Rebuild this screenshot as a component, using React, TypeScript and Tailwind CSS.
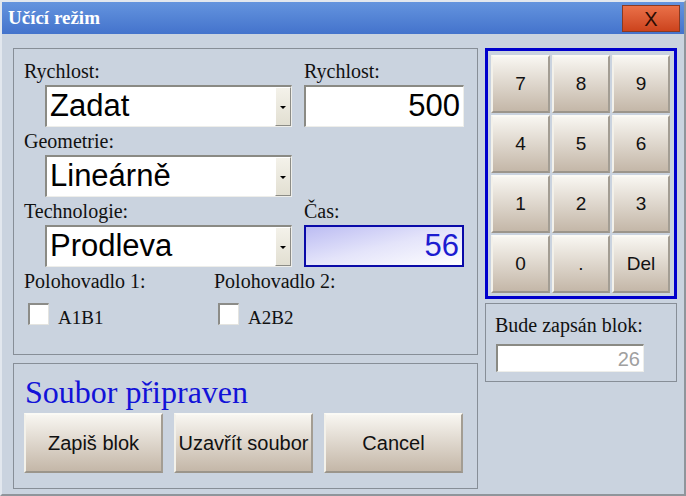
import React from 'react';

const serif = { fontFamily: '"Liberation Serif", "Times New Roman", serif' };
const sans = { fontFamily: '"Liberation Sans", Arial, sans-serif' };

function Label({ children }: { children: React.ReactNode }) {
  return (
    <div className="h-[28px] leading-[28px] text-[20px] text-[#111] whitespace-nowrap" style={serif}>
      {children}
    </div>
  );
}

function Select({ value }: { value: string }) {
  return (
    <div className="ml-[21px] w-[247px] h-[42px] flex bg-white border-t-2 border-l-2 border-t-[#8a8a84] border-l-[#8a8a84] border-b border-r border-b-[#eeeeea] border-r-[#eeeeea]">
      <div className="flex-1 flex items-center pl-[3px] text-[31px] text-black" style={sans}>
        {value}
      </div>
      <div className="w-[16px] flex items-center justify-center bg-linear-to-b from-[#f4f2ea] to-[#e2dfd2] border-t border-l border-t-[#ffffff] border-l-[#ffffff] border-b border-r border-b-[#8c8c86] border-r-[#8c8c86]">
        <div className="mt-[2px] w-0 h-0 border-l-[3px] border-r-[3px] border-t-[3px] border-l-transparent border-r-transparent border-t-black" />
      </div>
    </div>
  );
}

function NumInput({ value, active }: { value: string; active?: boolean }) {
  return (
    <div
      className={
        active
          ? 'w-[160px] h-[42px] flex items-center justify-end pr-[3px] border-2 border-[#0a0aa8] bg-linear-to-br from-[#bcbcf2] via-[#e4e4fa] to-[#ffffff] text-[31px] text-[#1c1cd0]'
          : 'w-[160px] h-[42px] flex items-center justify-end pr-[3px] bg-white border-t-2 border-l-2 border-t-[#8a8a84] border-l-[#8a8a84] border-b border-r border-b-[#eeeeea] border-r-[#eeeeea] text-[31px] text-black'
      }
      style={sans}
    >
      {value}
    </div>
  );
}

function Check({ label }: { label: string }) {
  return (
    <div className="mt-[8px] pl-[4px] flex items-start gap-[9px]">
      <div className="w-[21px] h-[22px] bg-white border-t-2 border-l-2 border-t-[#8c8c88] border-l-[#8c8c88] border-b border-r border-b-[#e4e4e0] border-r-[#e4e4e0]" />
      <span className="mt-[3px] leading-[24px] text-[19px] text-[#111]" style={serif}>
        {label}
      </span>
    </div>
  );
}

function Key({ children, size }: { children: React.ReactNode; size: string }) {
  return (
    <button
      className={`${size} flex items-center justify-center bg-linear-to-b from-[#f8f6f1] to-[#c4b7a8] border-t-2 border-l-2 border-t-[#fbfaf5] border-l-[#f3f1ea] border-b-2 border-r-2 border-b-[#9b958b] border-r-[#a39d93] text-[#111]`}
      style={sans}
    >
      {children}
    </button>
  );
}

export default function App() {
  const keys = ['7', '8', '9', '4', '5', '6', '1', '2', '3', '0', '.', 'Del'];
  return (
    <div className="w-[686px] h-[496px] flex flex-col bg-[#cad3df] border-2 border-t-[#e2e7ee] border-l-[#e2e7ee] border-r-[#8f959b] border-b-[#8f959b] overflow-hidden">
      <div className="h-[32px] flex justify-between bg-linear-to-b from-[#6494de] to-[#4473cc]">
        <div className="pl-[6px] leading-[32px] text-[19px] font-bold text-white" style={serif}>
          Učící režim
        </div>
        <button
          className="mt-[3px] mr-[4px] w-[58px] h-[27px] flex items-center justify-center bg-linear-to-b from-[#ea7048] to-[#cc431c] border border-[#8a3a22] text-[20px] text-[#2a0c04]"
          style={sans}
        >
          X
        </button>
      </div>

      <div className="flex-1 flex gap-[7px] pl-[11px] pt-[14px]">
        <div className="w-[465px] flex flex-col gap-[8px]">
          <div className="h-[307px] border border-[#878e97] pl-[10px] pt-[8px]">
            <div className="flex gap-[12px]">
              <div className="w-[268px]">
                <Label>Rychlost:</Label>
                <Select value="Zadat" />
                <Label>Geometrie:</Label>
                <Select value="Lineárně" />
                <Label>Technologie:</Label>
                <Select value="Prodleva" />
              </div>
              <div className="w-[160px]">
                <Label>Rychlost:</Label>
                <NumInput value="500" />
                <div className="h-[70px]" />
                <Label>Čas:</Label>
                <NumInput value="56" active />
              </div>
            </div>
            <div className="flex">
              <div className="w-[190px]">
                <Label>Polohovadlo 1:</Label>
                <Check label="A1B1" />
              </div>
              <div className="w-[190px]">
                <Label>Polohovadlo 2:</Label>
                <Check label="A2B2" />
              </div>
            </div>
          </div>

          <div className="h-[126px] border border-[#878e97] pl-[10px] pt-[12px]">
            <div className="pl-[1px] h-[32px] leading-[32px] text-[32px] text-[#1212d8]" style={serif}>
              Soubor připraven
            </div>
            <div className="mt-[5px] flex gap-[11px]">
              <Key size="w-[139px] h-[60px] text-[20px]">Zapiš blok</Key>
              <Key size="w-[139px] h-[60px] text-[20px]">Uzavřít soubor</Key>
              <Key size="w-[139px] h-[60px] text-[20px]">Cancel</Key>
            </div>
          </div>
        </div>

        <div className="w-[192px] flex flex-col gap-[4px]">
          <div className="h-[251px] border-[3px] border-[#0000cc] pl-[3px] pt-[4px]">
            <div className="grid grid-cols-[59px_58px_58px] auto-rows-[58px] gap-[2px]">
              {keys.map((k) => (
                <Key key={k} size="w-full h-full text-[19px]">
                  {k}
                </Key>
              ))}
            </div>
          </div>
          <div className="h-[79px] border border-[#878e97] pt-[9px]">
            <div className="pl-[9px] leading-[24px] text-[20px] text-[#111]" style={serif}>
              Bude zapsán blok:
            </div>
            <div className="mt-[7px] ml-[10px] w-[148px] h-[28px] flex items-center justify-end pr-[3px] bg-white border-t-2 border-l-2 border-t-[#8a8a84] border-l-[#8a8a84] border-b border-r border-b-[#eeeeea] border-r-[#eeeeea] text-[20px] text-[#a0a0a0]" style={sans}>
              26
            </div>
          </div>
        </div>
      </div>
    </div>
  );
}
